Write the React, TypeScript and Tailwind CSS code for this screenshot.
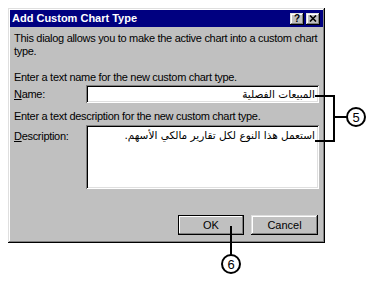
import React from "react";

const raised =
  "shadow-[inset_-1px_-1px_#000,inset_1px_1px_#dfdfdf,inset_-2px_-2px_#808080,inset_2px_2px_#fff]";
const sunken =
  "shadow-[inset_1px_1px_#808080,inset_-1px_-1px_#fff,inset_2px_2px_#000,inset_-2px_-2px_#dfdfdf]";

function TitleBtn({ children }: { children: React.ReactNode }) {
  return (
    <div
      className={`w-[14px] h-[12px] bg-[#c0c0c0] ${raised} flex items-center justify-center text-[10px] font-bold leading-none text-black`}
    >
      {children}
    </div>
  );
}

export default function App() {
  return (
    <div className="relative w-[377px] h-[282px] bg-white font-['Liberation_Sans',sans-serif] text-[11px] leading-[13px] text-black overflow-hidden">
      <div className="pl-[8px] pt-[8px]">
        <div className={`w-[317px] h-[235px] bg-[#c0c0c0] p-[2px] ${raised} flex flex-col`}>
          <div className="h-[17px] bg-[#000080] flex items-center justify-between pl-[2px] pr-[3px]">
            <span className="text-white font-bold text-[11px]">Add Custom Chart Type</span>
            <div className="flex gap-[2px]">
              <TitleBtn>?</TitleBtn>
              <TitleBtn>
                <svg width="8" height="7" viewBox="0 0 8 7">
                  <path d="M1 0.5 L7 6.5 M7 0.5 L1 6.5" stroke="#000" strokeWidth="1.6" />
                </svg>
              </TitleBtn>
            </div>
          </div>
          <div className="flex flex-col px-[4px] pt-[5px] tracking-[-0.3px]">
            <p>This dialog allows you to make the active chart into a custom chart type.</p>
            <p className="mt-[13px]">Enter a text name for the new custom chart type.</p>
            <div className="flex items-center mt-[1px]">
              <span className="w-[72px]"><u>N</u>ame:</span>
              <div
                dir="rtl"
                className={`w-[233px] h-[18px] bg-white ${sunken} px-[4px] flex items-center font-['DejaVu_Sans',sans-serif] text-[10.5px] tracking-normal`}
              >
                المبيعات الفصلية
              </div>
            </div>
            <p className="mt-[7px]">Enter a text description for the new custom chart type.</p>
            <div className="flex items-start mt-[2px]">
              <span className="w-[72px] pt-[5px]"><u>D</u>escription:</span>
              <div
                dir="rtl"
                className={`w-[233px] h-[64px] bg-white ${sunken} px-[4px] pt-[4px] font-['DejaVu_Sans',sans-serif] text-[10.5px] tracking-normal`}
              >
                استعمل هذا النوع لكل تقارير مالكي الأسهم.
              </div>
            </div>
            <div className="flex justify-end gap-[7px] mt-[26px] pr-[1px] tracking-normal">
              <button className="w-[66px] h-[20px] bg-[#c0c0c0] shadow-[inset_0_0_0_1px_#000,inset_-2px_-2px_#808080,inset_2px_2px_#fff] flex items-center justify-center">
                OK
              </button>
              <button className={`w-[67px] h-[20px] bg-[#c0c0c0] ${raised} flex items-center justify-center`}>
                Cancel
              </button>
            </div>
          </div>
        </div>
      </div>
      <svg className="absolute left-0 top-0 pointer-events-none" width="377" height="282" viewBox="0 0 377 282">
        <g stroke="#000" strokeWidth="2" fill="none">
          <path d="M315 96 H334 V141 H315" />
          <path d="M334 117 H347" />
          <circle cx="356" cy="117" r="9" fill="#fff" />
          <path d="M231 226 V255" />
          <circle cx="231" cy="264" r="9" fill="#fff" />
        </g>
        <text x="356" y="122" textAnchor="middle" fontSize="13" fontFamily="Liberation Sans, sans-serif" fill="#000">5</text>
        <text x="231" y="269" textAnchor="middle" fontSize="13" fontFamily="Liberation Sans, sans-serif" fill="#000">6</text>
      </svg>
    </div>
  );
}
